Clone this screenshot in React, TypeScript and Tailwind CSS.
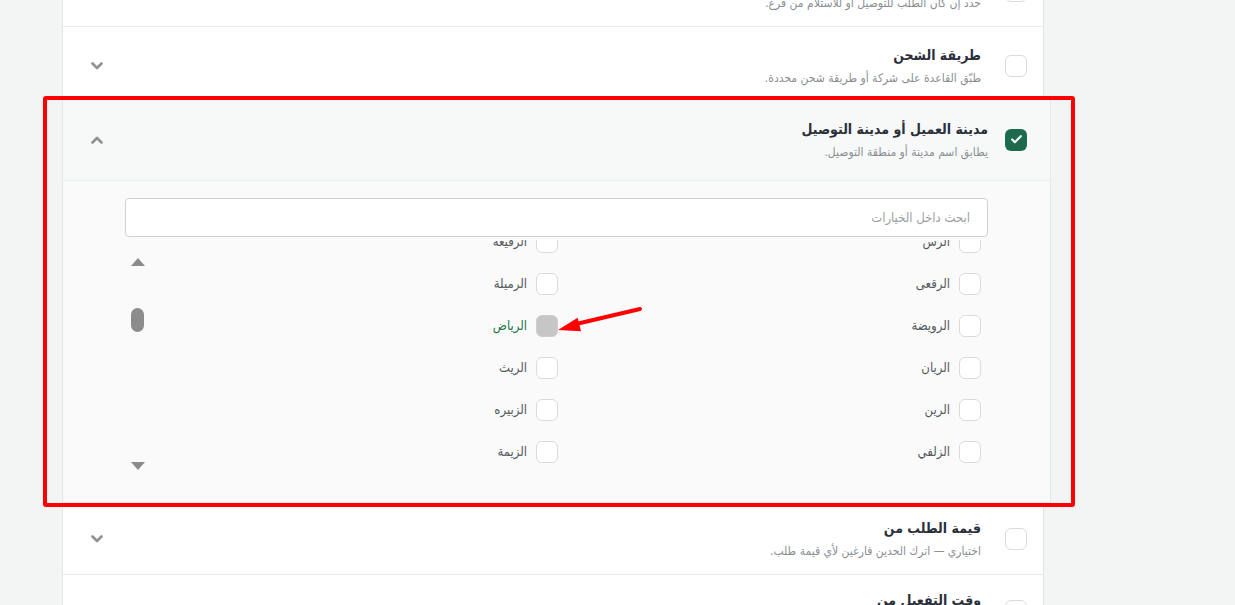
import { Check } from "lucide-react";

type BoxState = "off" | "on" | "muted";

function Tick({ state = "off" }: { state?: BoxState }) {
  if (state === "on")
    return (
      <span className="flex h-[22px] w-[22px] shrink-0 items-center justify-center rounded-md bg-[#1d6a4e]">
        <Check size={13} strokeWidth={4} className="text-white" />
      </span>
    );
  return (
    <span
      className={`block h-[22px] w-[22px] shrink-0 rounded-md border-[1.5px] ${
        state === "muted" ? "border-[#cdcdcd] bg-[#c6c6c6]" : "border-[#d8dbdf] bg-white"
      }`}
    />
  );
}

function Chevron({ up = false }: { up?: boolean }) {
  return (
    <svg width="12" height="8" viewBox="0 0 12 8" className={up ? "rotate-180" : ""}>
      <path
        d="M1.5 1.5 6 6l4.5-4.5"
        fill="none"
        stroke="#8b9393"
        strokeWidth="2.6"
        strokeLinecap="round"
        strokeLinejoin="round"
      />
    </svg>
  );
}

function RuleRow({ title, hint, className = "" }: { title: string; hint: string; className?: string }) {
  return (
    <div className={`flex h-[72px] items-center border-b border-[#e8eaea] pr-[16px] pl-7 ${className}`}>
      <Tick />
      <div className="mr-6 flex-1">
        <div className="text-[14px] font-bold leading-5 text-[#2b2f3a]">{title}</div>
        <div className="mt-1 text-[12px] leading-[18px] text-[#8a8f94]">{hint}</div>
      </div>
      <Chevron />
    </div>
  );
}

// row-major, right column first
const cities: [string, string][] = [
  ["الرس", "الرفيعة"],
  ["الرقعى", "الرميلة"],
  ["الرويضة", "الرياض"],
  ["الريان", "الريث"],
  ["الرين", "الزبيره"],
  ["الزلفي", "الزيمة"],
  ["السليل", "الشماسية"],
];

function CityOption({ name }: { name: string }) {
  const picked = name === "الرياض";
  return (
    <div className="flex h-[42px] items-center gap-[9px]">
      <Tick state={picked ? "muted" : "off"} />
      <span className={`text-[13px] ${picked ? "text-[#23774c]" : "text-[#555a60]"}`}>{name}</span>
    </div>
  );
}

function CityPicker() {
  return (
    <div className="-mr-2 border-r border-[#e6e8e8]">
      <div className="flex h-[82px] items-center border-b border-[#eceeee] bg-[#f7f8f8] pr-[23px] pl-7">
        <Tick state="on" />
        <div className="mr-[17px] flex-1">
          <div className="text-[14px] font-bold leading-5 text-[#2b2f3a]">مدينة العميل أو مدينة التوصيل</div>
          <div className="mt-1 text-[12px] leading-[18px] text-[#8a8f94]">يطابق اسم مدينة أو منطقة التوصيل.</div>
        </div>
        <Chevron up />
      </div>

      <div className="h-[322px] border-b border-[#e8eaea] bg-[#fafafa] pt-[17px] pr-[62px] pl-[62px]">
        <input
          placeholder="ابحث داخل الخيارات"
          className="h-[39px] w-full rounded-[4px] border border-[#cfd2d4] bg-white px-[17px] text-[13px] outline-none placeholder:text-[#9a9fa4]"
        />

        <div className="mt-[3px] flex h-[238px]">
          <div className="h-full flex-1 overflow-hidden pr-[7px]">
            <div className="-mt-[19px] grid grid-cols-[423px_1fr]">
              {cities.map(([a, b]) => (
                <div key={a} className="contents">
                  <CityOption name={a} />
                  <CityOption name={b} />
                </div>
              ))}
            </div>
          </div>

          {/* scroll track */}
          <div className="flex h-full w-[25px] flex-col items-center pt-[18px] pb-2">
            <span className="h-0 w-0 border-x-[7px] border-b-[8px] border-x-transparent border-b-[#8c8c8c]" />
            <span className="mt-[42px] h-[24px] w-[13px] rounded-full bg-[#8c8c8c]" />
            <span className="flex-1" />
            <span className="h-0 w-0 border-x-[7px] border-t-[8px] border-x-transparent border-t-[#8c8c8c]" />
          </div>
        </div>
      </div>
    </div>
  );
}

export default function App() {
  return (
    <div
      dir="rtl"
      className="relative h-[605px] overflow-hidden bg-[#f3f4f4] font-['DejaVu_Sans_Condensed','DejaVu_Sans',sans-serif]"
    >
      <div className="mr-[191px] w-[982px] border-x border-[#e3e6e6] bg-white">
        <div className="-mt-[45px]">
          <RuleRow title="نوع الطلب" hint="حدد إن كان الطلب للتوصيل أو للاستلام من فرع." />
        </div>
        <RuleRow className="pt-[6px]" title="طريقة الشحن" hint="طبّق القاعدة على شركة أو طريقة شحن محددة." />
        <CityPicker />
        <RuleRow title="قيمة الطلب من" hint="اختياري — اترك الحدين فارغين لأي قيمة طلب." />
        <RuleRow title="وقت التفعيل من" hint="اختياري — حدد بداية ونهاية فترة التفعيل." />
      </div>

      {/* highlight frame + pointer */}
      <div className="pointer-events-none absolute top-[96px] left-[43px] h-[411px] w-[1032px] rounded-[3px] border-4 border-[#ff0000]" />
      <svg className="pointer-events-none absolute inset-0" width="1235" height="605">
        <line x1="640" y1="309" x2="576" y2="324" stroke="#ff0000" strokeWidth="4" strokeLinecap="round" />
        <polygon points="558,330 577.6,317.7 581,331.3" fill="#ff0000" />
      </svg>
    </div>
  );
}
